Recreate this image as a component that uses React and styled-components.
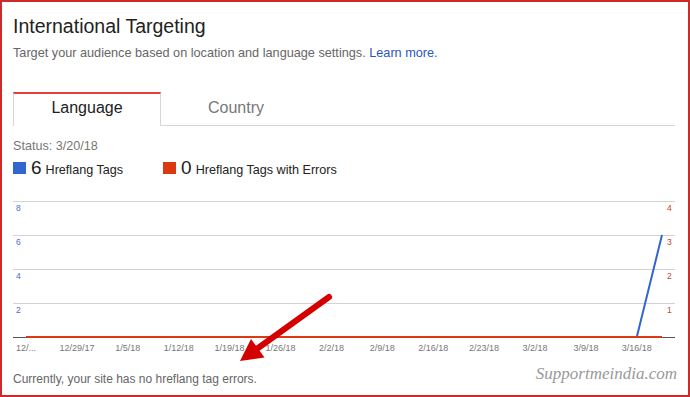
import React from 'react';
import styled, { createGlobalStyle } from 'styled-components';

const GlobalStyle = createGlobalStyle`
  html, body {
    margin: 0;
    padding: 0;
    background: #fff;
  }
  body {
    font-family: "Liberation Sans", Arial, sans-serif;
  }
`;

const Frame = styled.div`
  position: relative;
  box-sizing: border-box;
  width: 690px;
  height: 397px;
  border: 2px solid #cf2a2a;
  padding: 12px 13px 0 11px;
  overflow: hidden;
  background: #fff;
`;

const Title = styled.h1`
  margin: 0;
  font-size: 19.5px;
  line-height: 24px;
  font-weight: normal;
  color: #222;
`;

const Subtitle = styled.p`
  margin: 7px 0 0;
  font-size: 12.7px;
  line-height: 16px;
  color: #666;
  a {
    color: #2a56c6;
    text-decoration: none;
  }
`;

const TabBar = styled.div`
  display: flex;
  margin-top: 31px;
  border-bottom: 1px solid #d6d6d6;
`;

const Tab = styled.div`
  box-sizing: border-box;
  width: ${(p) => (p.$active ? '148px' : '150px')};
  height: ${(p) => (p.$active ? '34px' : '33px')};
  margin-bottom: ${(p) => (p.$active ? '-1px' : '0')};
  font-size: 16px;
  line-height: 27px;
  text-align: center;
  color: ${(p) => (p.$active ? '#212121' : '#777')};
  background: ${(p) => (p.$active ? '#fff' : 'transparent')};
  border-top: 2px solid ${(p) => (p.$active ? '#e0413a' : 'transparent')};
  border-left: 1px solid ${(p) => (p.$active ? '#d6d6d6' : 'transparent')};
  border-right: 1px solid ${(p) => (p.$active ? '#d6d6d6' : 'transparent')};
`;

const Status = styled.div`
  margin-top: 12px;
  font-size: 12.6px;
  line-height: 16px;
  color: #777;
`;

const Legend = styled.div`
  display: flex;
  align-items: baseline;
  gap: 40px;
  margin-top: 3px;
  height: 22px;
`;

const LegendItem = styled.div`
  display: flex;
  align-items: baseline;
`;

const Swatch = styled.span`
  display: block;
  width: 13px;
  height: 12px;
  background: ${(p) => p.$color};
  margin-right: 5px;
`;

const Count = styled.span`
  font-size: 19px;
  line-height: 22px;
  color: #222;
  margin-right: 4px;
`;

const LegendLabel = styled.span`
  font-size: 12.6px;
  color: #222;
`;

const Chart = styled.svg`
  display: block;
  margin-top: 11px;
  text {
    font-family: "Liberation Sans", Arial, sans-serif;
  }
  .axis-left {
    font-size: 8.5px;
    fill: #4b6cc6;
  }
  .axis-right {
    font-size: 8.5px;
    fill: #c8452e;
  }
  .axis-x {
    font-size: 9px;
    fill: #777;
  }
`;

const Footer = styled.div`
  margin-top: 11px;
  font-size: 12px;
  line-height: 16px;
  color: #666;
`;

const Watermark = styled.div`
  position: absolute;
  top: 362px;
  right: 11px;
  font-family: "Liberation Serif", "Times New Roman", serif;
  font-style: italic;
  font-size: 17px;
  line-height: 20px;
  color: #999;
`;

const ArrowOverlay = styled.svg`
  position: absolute;
  left: -2px;
  top: -2px;
  pointer-events: none;
`;

const dates = [
  '12/...', '12/29/17', '1/5/18', '1/12/18', '1/19/18', '1/26/18', '2/2/18',
  '2/9/18', '2/16/18', '2/23/18', '3/2/18', '3/9/18', '3/16/18',
];

const W = 662;
const grid = [11, 45, 79, 113];
const base = 147;
const step = 50.9;
const xAt = (i) => 13 + step * i;

function HreflangChart() {
  return (
    <Chart width={W} height={170} viewBox={`0 0 ${W} 170`}>
      {grid.map((y) => (
        <line key={y} x1="0" x2={W} y1={y + 0.5} y2={y + 0.5} stroke="#d3d3d3" strokeWidth="1" />
      ))}
      <line x1="0" x2={W} y1={base + 0.5} y2={base + 0.5} stroke="#555" strokeWidth="1" />
      {['8', '6', '4', '2'].map((v, i) => (
        <text key={v} className="axis-left" x="3" y={grid[i] + 10}>{v}</text>
      ))}
      {['4', '3', '2', '1'].map((v, i) => (
        <text key={v} className="axis-right" x="654" y={grid[i] + 10}>{v}</text>
      ))}
      <polyline
        points={`${xAt(0)},${base} ${xAt(12)},${base} 649,45`}
        fill="none"
        stroke="#3366cc"
        strokeWidth="2"
      />
      <line x1={xAt(0)} x2="649" y1={base} y2={base} stroke="#dc3912" strokeWidth="2" />
      {dates.map((d, i) => (
        <text key={d} className="axis-x" x={xAt(i)} y="161" textAnchor="middle">{d}</text>
      ))}
    </Chart>
  );
}

export default function App() {
  return (
    <>
      <GlobalStyle />
      <Frame>
        <Title>International Targeting</Title>
        <Subtitle>
          Target your audience based on location and language settings. <a href="#">Learn more.</a>
        </Subtitle>
        <TabBar>
          <Tab $active>Language</Tab>
          <Tab>Country</Tab>
        </TabBar>
        <Status>Status: 3/20/18</Status>
        <Legend>
          <LegendItem>
            <Swatch $color="#3366cc" />
            <Count>6</Count>
            <LegendLabel>Hreflang Tags</LegendLabel>
          </LegendItem>
          <LegendItem>
            <Swatch $color="#dc3912" />
            <Count>0</Count>
            <LegendLabel>Hreflang Tags with Errors</LegendLabel>
          </LegendItem>
        </Legend>
        <HreflangChart />
        <Footer>Currently, your site has no hreflang tag errors.</Footer>
        <Watermark>Supportmeindia.com</Watermark>
        <ArrowOverlay width="690" height="397" viewBox="0 0 690 397">
          <line x1="329" y1="297" x2="256" y2="349.5" stroke="#d40000" strokeWidth="6" strokeLinecap="round" />
          <polygon points="240,361 264.5,357.5 251,339" fill="#d40000" />
        </ArrowOverlay>
      </Frame>
    </>
  );
}
